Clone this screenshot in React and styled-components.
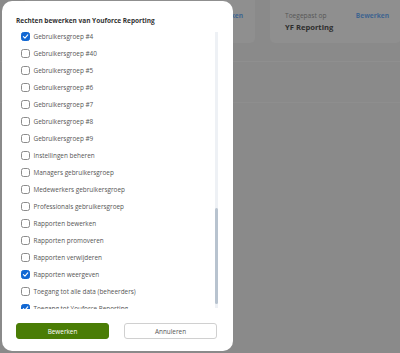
import React from 'react'
import styled, { createGlobalStyle } from 'styled-components'

const GlobalStyle = createGlobalStyle`
  html, body {
    margin: 0;
    padding: 0;
    background: #8a8a8a;
    font-family: 'Open Sans', 'Noto Sans', sans-serif;
  }
`

const permissions = [
  { name: 'Gebruikersgroep #4', checked: true },
  { name: 'Gebruikersgroep #40' },
  { name: 'Gebruikersgroep #5' },
  { name: 'Gebruikersgroep #6' },
  { name: 'Gebruikersgroep #7' },
  { name: 'Gebruikersgroep #8' },
  { name: 'Gebruikersgroep #9' },
  { name: 'Instellingen beheren' },
  { name: 'Managers gebruikersgroep' },
  { name: 'Medewerkers gebruikersgroep' },
  { name: 'Professionals gebruikersgroep' },
  { name: 'Rapporten bewerken' },
  { name: 'Rapporten promoveren' },
  { name: 'Rapporten verwijderen' },
  { name: 'Rapporten weergeven', checked: true },
  { name: 'Toegang tot alle data (beheerders)' },
  { name: 'Toegang tot Youforce Reporting', checked: true },
]

const Check = () => (
  <svg width='7' height='7' viewBox='0 0 10 10'>
    <path d='M2 5.2 L4.2 7.3 L8.2 2.8' fill='none' stroke='#fff' strokeWidth='1.6' strokeLinecap='round' strokeLinejoin='round' />
  </svg>
)

const App = () => {
  return (
    <>
      <GlobalStyle />
      <Page>
        <Cards>
          <Card $width={230} $pb={22}>
            <span />
            <Link>Bewerken</Link>
          </Card>
          <Card $width={131} $pb={10}>
            <div>
              <CardLabel>Toegepast op</CardLabel>
              <CardValue>YF Reporting</CardValue>
            </div>
            <Link>Bewerken</Link>
          </Card>
        </Cards>
        <Section />
      </Page>

      <Modal>
        <Title>Rechten bewerken van Youforce Reporting</Title>
        <ListArea>
          <List>
            {permissions.map((p) => (
              <Row key={p.name}>
                <Box $checked={p.checked}>{p.checked && <Check />}</Box>
                <Label>{p.name}</Label>
              </Row>
            ))}
          </List>
          <Track>
            <Thumb />
          </Track>
        </ListArea>
        <Footer>
          <Button $primary>Bewerken</Button>
          <Button>Annuleren</Button>
        </Footer>
      </Modal>
    </>
  )
}

const Page = styled.div`
  width: 400px;
  height: 353px;
  overflow: hidden;
`

const Cards = styled.div`
  display: flex;
  align-items: flex-start;
  gap: 15px;
  padding-left: 25px;
  margin-top: -20px;
`

const Card = styled.div`
  flex: none;
  width: ${(p) => p.$width}px;
  box-sizing: border-box;
  padding: 31px 12px ${(p) => p.$pb}px 15px;
  background: #8f8f8f;
  border-radius: 5px;
  display: flex;
  justify-content: space-between;
  align-items: flex-start;
`

const CardLabel = styled.div`
  font-size: 6.6px;
  line-height: 10px;
  color: #575757;
`

const CardValue = styled.div`
  font-size: 7.6px;
  line-height: 12px;
  font-weight: 700;
  color: #2e2e2e;
`

const Link = styled.span`
  font-size: 6.6px;
  line-height: 10px;
  font-weight: 700;
  color: #3f6590;
`

const Section = styled.div`
  margin-top: 18px;
  height: 40px;
  border-top: 1px solid #8f8f8f;
  border-bottom: 1px solid #8e8e8e;
`

const Modal = styled.div`
  position: absolute;
  left: 2px;
  top: 1px;
  width: 231px;
  height: 350px;
  box-sizing: border-box;
  padding: 14px 15px 0 14px;
  background: #fff;
  border-radius: 10px;
  display: flex;
  flex-direction: column;
`

const Title = styled.h2`
  margin: 0;
  font-size: 6.5px;
  line-height: 12px;
  font-weight: 700;
  color: #333;
`

const ListArea = styled.div`
  display: flex;
  height: 281px;
  margin-top: 1px;
`

const List = styled.div`
  flex: 1;
  overflow: hidden;
`

const Row = styled.div`
  height: 17px;
  display: flex;
  align-items: center;
  gap: 4px;
  padding-left: 4.5px;
`

const Box = styled.span`
  flex: none;
  width: 9px;
  height: 9px;
  box-sizing: border-box;
  border-radius: 2.5px;
  border: 1px solid ${(p) => (p.$checked ? '#1268d3' : '#8c8c8c')};
  background: ${(p) => (p.$checked ? '#1268d3' : '#fff')};
  display: flex;
  align-items: center;
  justify-content: center;
`

const Label = styled.span`
  font-size: 6.4px;
  color: #555;
  white-space: nowrap;
`

const Track = styled.div`
  flex: none;
  width: 3px;
  margin: 4px 0 1px;
  background: #eef1f5;
  display: flex;
  flex-direction: column;
  justify-content: flex-end;
`

const Thumb = styled.div`
  height: 96px;
  margin-bottom: 4px;
  background: #b8c3cf;
  border-radius: 2px;
`

const Footer = styled.div`
  display: flex;
  gap: 15px;
  margin-top: 14px;
`

const Button = styled.button`
  width: 93px;
  height: 16px;
  padding: 0;
  box-sizing: border-box;
  border-radius: 3px;
  font-family: 'Open Sans', 'Noto Sans', sans-serif;
  font-size: 6.4px;
  border: 1px solid ${(p) => (p.$primary ? '#4a7d05' : '#d0d0d0')};
  background: ${(p) => (p.$primary ? '#4a7d05' : '#fff')};
  color: ${(p) => (p.$primary ? '#fff' : '#555')};
`

export default App
